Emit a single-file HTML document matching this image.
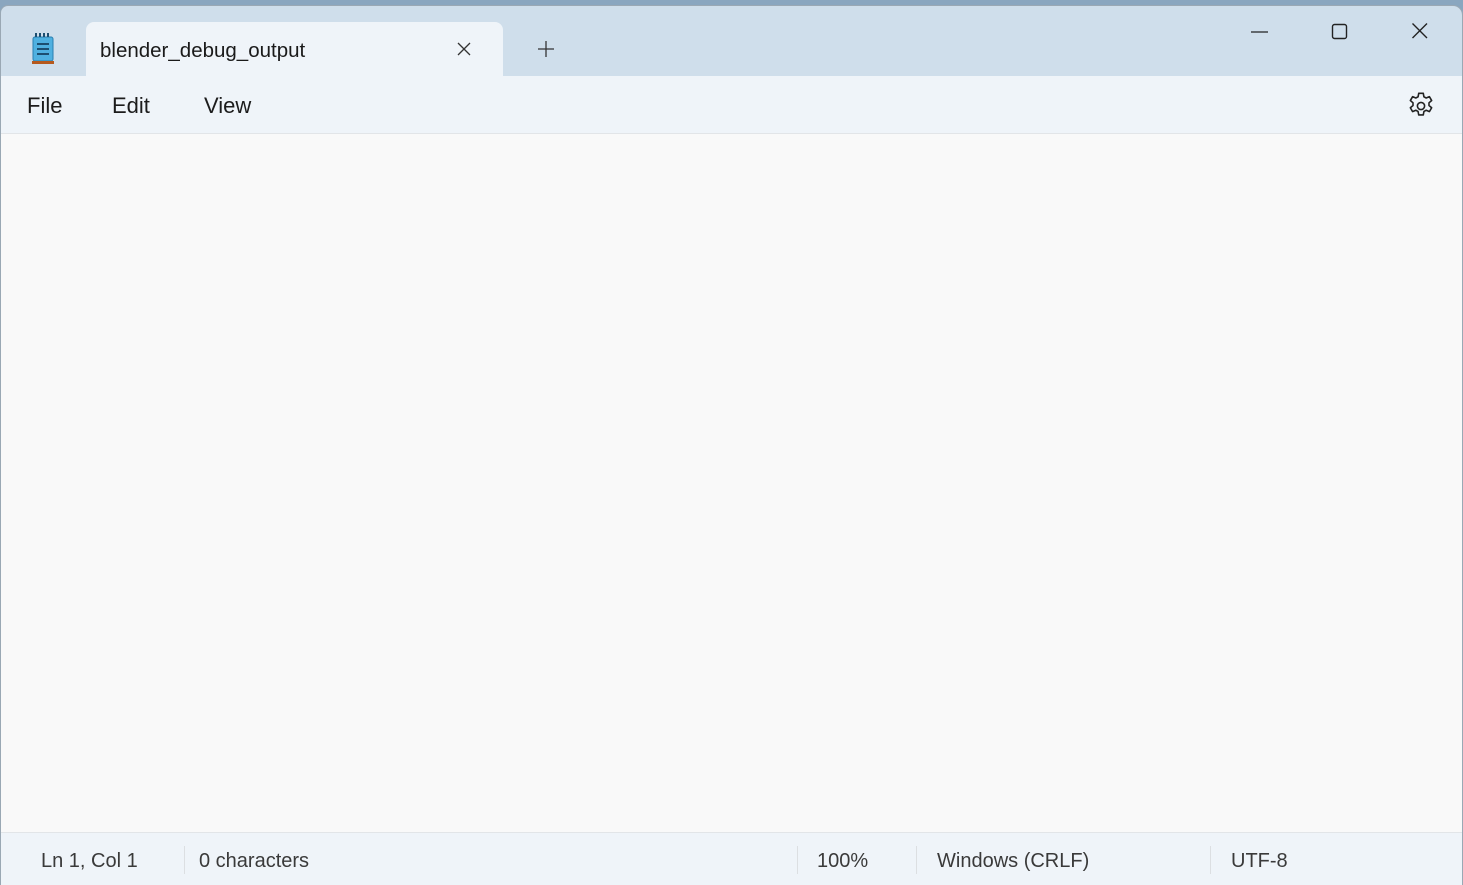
<!DOCTYPE html>
<html><head><meta charset="utf-8"><style>
*{margin:0;padding:0;box-sizing:border-box}
body{width:1463px;height:885px;overflow:hidden;background:#8aa6bf;font-family:"Liberation Sans",sans-serif;position:relative}
.win{position:absolute;left:0;top:5px;width:1463px;height:880px;background:#cfdeeb;border-top-left-radius:8px;border-top-right-radius:10px;overflow:hidden;border:1px solid #9aa8b4;border-bottom:none}
.tab{position:absolute;left:85px;top:16px;width:417px;height:60px;background:#eff4f9;border-radius:8px 8px 0 0}
.tabt{position:absolute;left:99px;top:33px;font-size:20.5px;color:#1a1a1a}
.menu{position:absolute;left:0;top:70px;width:100%;height:58px;background:#eff4f9;border-bottom:1px solid #e2e5e8}
.menu span{position:absolute;top:17px;font-size:22px;color:#1c1c1c}
.edit{position:absolute;left:0;top:128px;width:100%;height:698px;background:#f9f9f9}
.status{position:absolute;left:0;top:826px;width:100%;height:54px;background:#eff4f9;border-top:1px solid #e2e5e8}
.status span{position:absolute;top:17px;font-size:20px;color:#3a3a3a}
.sep{position:absolute;top:13px;width:1px;height:28px;background:#dcdfe2}
</style></head><body>
<div class="win">
<svg style="position:absolute;left:30px;top:27px" width="24" height="32" viewBox="0 0 24 32">
<rect x="2" y="4" width="20" height="24" rx="2" fill="#4fb0e0"/>
<rect x="2" y="4" width="20" height="24" rx="2" fill="none" stroke="#2a7fb0" stroke-width="1"/>
<g fill="#1c4e70"><rect x="4" y="0" width="2" height="4"/><rect x="8" y="0" width="2" height="4"/><rect x="12" y="0" width="2" height="4"/><rect x="16" y="0" width="2" height="4"/></g>
<g stroke="#1c4e70" stroke-width="2"><line x1="6" y1="11" x2="18" y2="11"/><line x1="6" y1="16" x2="18" y2="16"/><line x1="6" y1="21" x2="18" y2="21"/></g>
<rect x="1" y="28" width="22" height="3" fill="#b5591e"/>
</svg>
<div class="tab"></div>
<div class="tabt">blender_debug_output</div>
<svg style="position:absolute;left:455px;top:35px" width="16" height="16"><path d="M2 2L14 14M14 2L2 14" stroke="#333" stroke-width="1.3"/></svg>
<svg style="position:absolute;left:535px;top:33px" width="20" height="20"><path d="M10 2V18M2 10H18" stroke="#333" stroke-width="1.3"/></svg>
<svg style="position:absolute;left:1250px;top:20px" width="18" height="12"><path d="M0 6H17" stroke="#222" stroke-width="1.3"/></svg>
<svg style="position:absolute;left:1330px;top:17px" width="18" height="18"><rect x="1.5" y="1.5" width="14" height="14" rx="2" fill="none" stroke="#222" stroke-width="1.4"/></svg>
<svg style="position:absolute;left:1410px;top:16px" width="18" height="18"><path d="M1.5 1.5L16 16M16 1.5L1.5 16" stroke="#222" stroke-width="1.4"/></svg>
<div class="menu">
<span style="left:26px">File</span><span style="left:111px">Edit</span><span style="left:203px">View</span>
<svg style="position:absolute;left:1404px;top:14px" width="32" height="32" viewBox="0 0 24 24"><path d="M10.3 2.5h3.4l.5 2.6 1.7.9 2.4-1 1.7 2.9-2 1.7v2l2 1.7-1.7 2.9-2.4-1-1.7.9-.5 2.6h-3.4l-.5-2.6-1.7-.9-2.4 1-1.7-2.9 2-1.7v-2l-2-1.7 1.7-2.9 2.4 1 1.7-.9z" fill="none" stroke="#222" stroke-width="1.2" stroke-linejoin="round"/><circle cx="12" cy="12" r="2.7" fill="none" stroke="#222" stroke-width="1.2"/></svg>
</div>
<div class="edit"></div>
<div class="status">
<span style="left:40px">Ln 1, Col 1</span><div class="sep" style="left:183px"></div>
<span style="left:198px">0 characters</span><div class="sep" style="left:796px"></div>
<span style="left:816px">100%</span><div class="sep" style="left:915px"></div>
<span style="left:936px">Windows (CRLF)</span><div class="sep" style="left:1209px"></div>
<span style="left:1230px">UTF-8</span>
</div>
</div>
</body></html>
